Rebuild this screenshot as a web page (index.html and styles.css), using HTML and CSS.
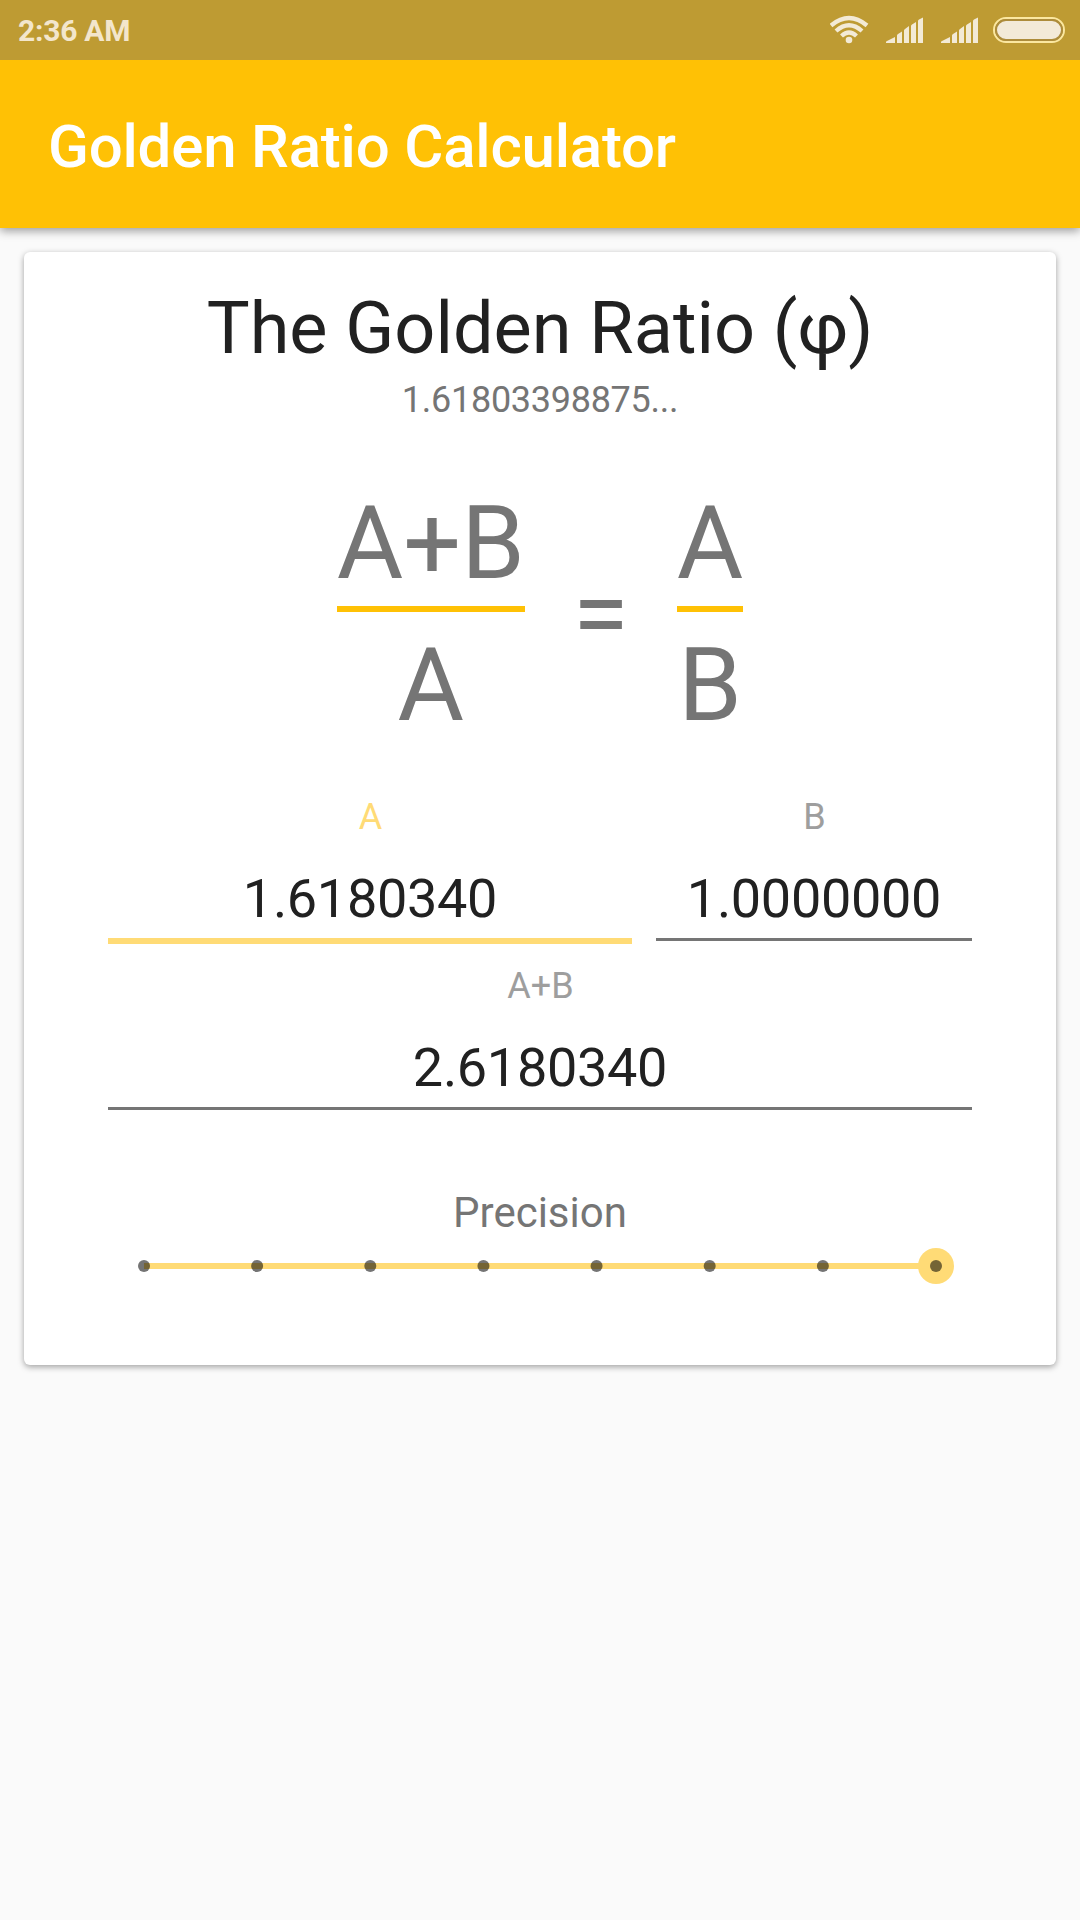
FILE: index.html
```html
<!DOCTYPE html>
<html lang="en">
<head>
<meta charset="utf-8">
<title>Golden Ratio Calculator</title>
<link rel="stylesheet" href="styles.css">
</head>
<body>
<div class="status-bar">
  <span class="clock">2:36 AM</span>
  <svg class="status-icons" width="250" height="60" viewBox="0 0 250 60" aria-hidden="true">
    <g class="wifi">
      <path d="M1 25.500 Q19 10.500 37 25.500"/>
      <path d="M6 31 Q19 19.500 32 31"/>
      <path d="M11.500 36 Q19 29 26.500 36"/>
      <circle cx="19" cy="40" r="3.300"/>
    </g>
    <g class="signal">
      <path d="M56 43Q55.500 41.500 57 41L65 37V43ZM67 43V35.500Q67 34.500 68 34L72 31.500V43ZM74 43V30.500Q74 29.500 75 29L79 26V43ZM81 43V26Q81 25 82 24.500L86 22V43ZM88 43V21Q88 20 89 19.500L93 17.500V43Z"/>
      <path transform="translate(55 0)" d="M56 43Q55.500 41.500 57 41L65 37V43ZM67 43V35.500Q67 34.500 68 34L72 31.500V43ZM74 43V30.500Q74 29.500 75 29L79 26V43ZM81 43V26Q81 25 82 24.500L86 22V43ZM88 43V21Q88 20 89 19.500L93 17.500V43Z"/>
    </g>
    <rect class="battery-shell" x="164" y="18" width="70" height="24" rx="12"/>
    <rect class="battery-level" x="166" y="20" width="66" height="20" rx="10"/>
  </svg>
</div>
<header class="app-bar"><h1 class="app-title">Golden Ratio Calculator</h1></header>
<main class="card">
  <h2 class="heading">The Golden Ratio (φ)</h2>
  <p class="phi">1.61803398875...</p>
  <div class="formula">
    <div class="fraction"><span class="numerator">A+B</span><span class="denominator">A</span></div>
    <span class="equals">=</span>
    <div class="fraction"><span class="numerator">A</span><span class="denominator">B</span></div>
  </div>
  <div class="fields">
    <div class="field field-active"><span class="label">A</span><span class="value">1.6180340</span></div>
    <div class="field"><span class="label">B</span><span class="value">1.0000000</span></div>
    <div class="field field-wide"><span class="label">A+B</span><span class="value">2.6180340</span></div>
  </div>
  <p class="precision">Precision</p>
  <svg class="slider" width="864" height="36" viewBox="0 0 864 36" aria-hidden="true">
    <path class="track" d="M36 18H828"/>
    <circle class="thumb" cx="828" cy="18" r="18"/>
    <g class="ticks">
      <circle cx="36" cy="18" r="6"/>
      <circle cx="149.140" cy="18" r="6"/>
      <circle cx="262.290" cy="18" r="6"/>
      <circle cx="375.430" cy="18" r="6"/>
      <circle cx="488.570" cy="18" r="6"/>
      <circle cx="601.710" cy="18" r="6"/>
      <circle cx="714.860" cy="18" r="6"/>
      <circle cx="828" cy="18" r="6"/>
    </g>
  </svg>
</main>
</body>
</html>
```
FILE: styles.css
```css
* { box-sizing: border-box; }

body {
  margin: 0;
  min-height: 1920px;
  background: #fafafa;
  color: #212121;
  font-family: Roboto, sans-serif;
}

h1, h2, p { margin: 0; font-weight: 400; }

.status-bar {
  position: relative;
  z-index: 1;
  display: flex;
  justify-content: space-between;
  height: 60px;
  padding-left: 18px;
  background: #be9b33;
}

.clock {
  padding-top: 13px;
  color: #f3e6cc;
  font-size: 30px;
  font-weight: 700;
  letter-spacing: -.25px;
  line-height: 35px;
}

.wifi, .signal { fill: #f3ead6; }
.wifi path { fill: none; stroke: #f3ead6; stroke-width: 4.3; }
.battery-shell { fill: none; stroke: #fbe7a0; stroke-width: 2; }
.battery-level { fill: #f3ead9; stroke: #ad8c3c; stroke-width: 2; }

.app-bar {
  height: 168px;
  padding: 52px 48px 0;
  background: #ffc105;
  box-shadow: 0 3px 9px rgba(0, 0, 0, .38);
}

.app-title {
  color: #fff;
  font-size: 60px;
  font-weight: 500;
  letter-spacing: -.2px;
  line-height: 70px;
}

.card {
  display: flex;
  flex-direction: column;
  height: 1113px;
  margin: 24px 24px 0;
  padding: 35px 84px 0;
  border-radius: 6px;
  background: #fff;
  box-shadow: 0 2px 6px rgba(0, 0, 0, .36);
  text-align: center;
}

.heading { font-size: 72px; line-height: 84px; }
.phi {
  margin-top: 8px;
  color: #757575;
  font-size: 36px;
  letter-spacing: -.28px;
  line-height: 42px;
}

.formula {
  display: flex;
  align-items: center;
  justify-content: center;
  gap: 48px;
  margin-top: 62px;
  color: #757575;
  font-size: 102px;
  line-height: 120px;
}

.fraction { display: flex; flex-direction: column; }
.numerator { padding-bottom: 3px; border-bottom: 6px solid #ffc105; }
.denominator { padding-top: 13px; }

.fields {
  display: grid;
  grid-template-columns: 524px 316px;
  gap: 21px 24px;
  margin-top: 51px;
}

.field { display: flex; flex-direction: column; }
.label { padding-left: 1px; color: #9e9e9e; font-size: 36px; line-height: 42px; }
.value {
  margin-top: 29px;
  padding-bottom: 7px;
  border-bottom: 3px solid #757575;
  font-size: 54px;
  letter-spacing: -.3px;
  line-height: 64px;
}
.field-active .label { color: #ffdb76; }
.field-active .value { border-bottom: 6px solid #ffdb76; }
.field-wide { grid-column: 1 / -1; }

.precision { margin-top: 78px; color: #757575; font-size: 42px; line-height: 50px; }

.slider { margin-top: 10px; }
.track { stroke: #ffdb76; stroke-width: 6; }
.thumb { fill: #ffdb76; }
.ticks { fill: #000; opacity: .54; }
```
